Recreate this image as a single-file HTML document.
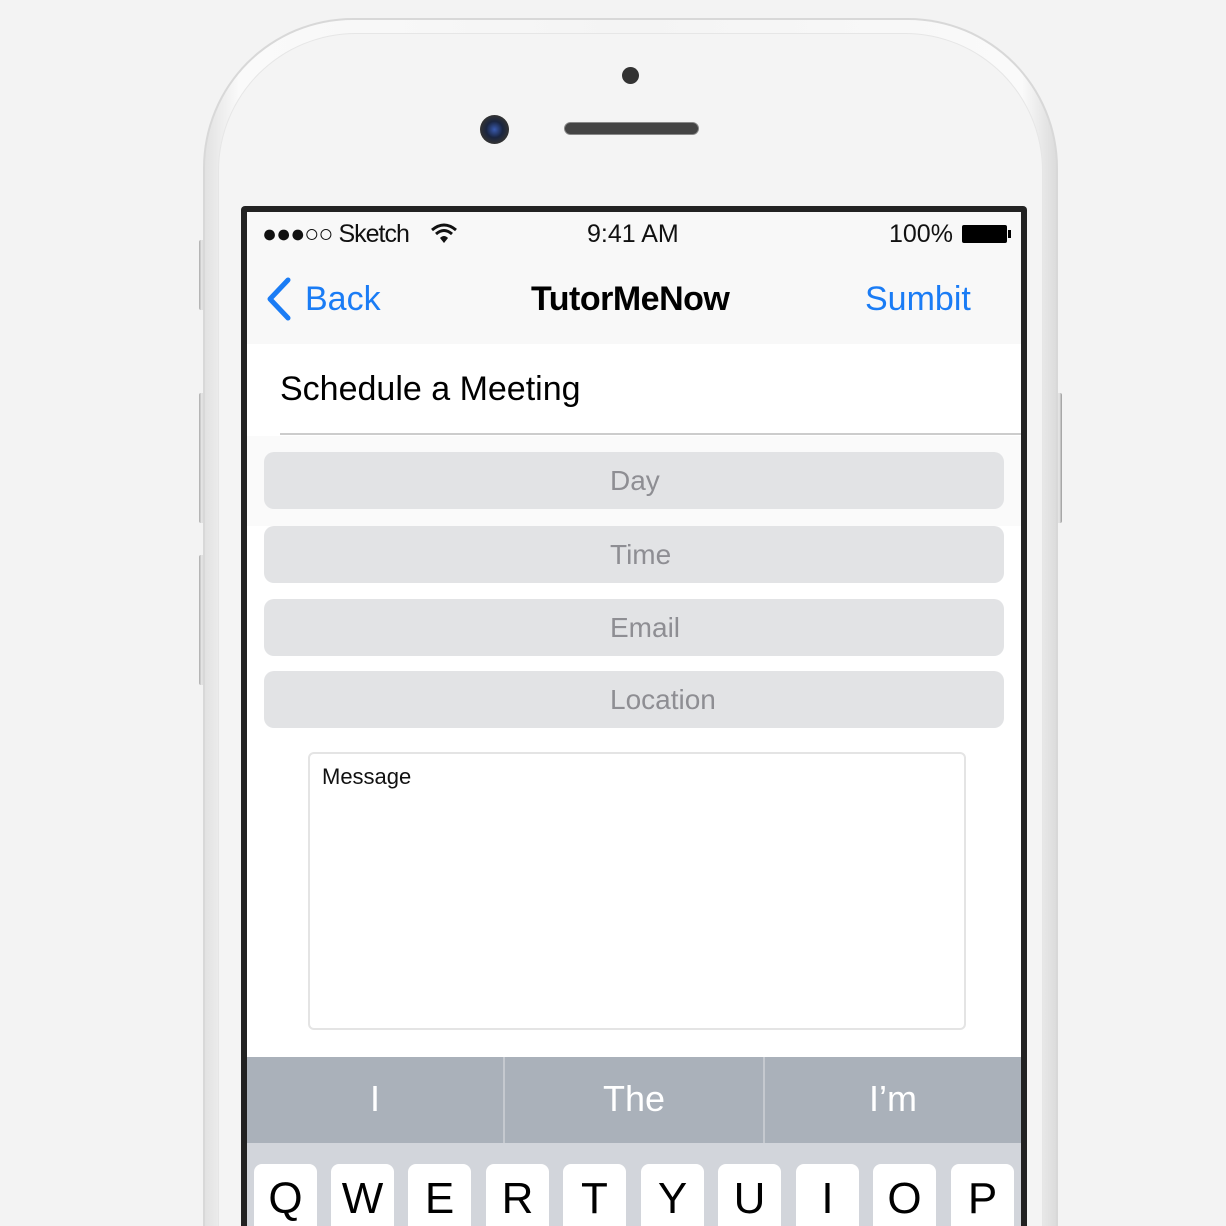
<!DOCTYPE html>
<html style="overflow:hidden;width:1226px;height:1226px"><head><meta charset="utf-8"><style>
*{margin:0;padding:0;box-sizing:border-box}
body{width:1226px;height:1226px;background:#f3f3f3;overflow:hidden;font-family:"Liberation Sans",sans-serif}
#w{position:relative;width:1226px;height:1226px;overflow:hidden}
.a{position:absolute}
.body{left:203px;top:18px;width:855px;height:1208px;border-radius:150px 150px 0 0;background:linear-gradient(90deg,#e2e2e2,#fafafa 4%,#f4f4f4 50%,#fafafa 96%,#dcdcdc);border:2px solid #d8d8d8;border-bottom:0}
.bez{left:218px;top:33px;width:825px;height:1193px;border-radius:138px 138px 0 0;background:#f4f4f4;border:1px solid #e6e6e6;border-bottom:0}
.btn{background:linear-gradient(90deg,#aaa,#eee,#999);border-radius:2px;width:6px}
.screen{left:241px;top:206px;width:786px;height:1020px;background:#222;border-radius:4px 4px 0 0}
.inner{left:247px;top:212px;width:774px;height:1014px;background:#fff;overflow:hidden}
.st{font-size:25px;color:#111;top:220px}
.field{left:264px;width:740px;height:57px;border-radius:10px;background:#e2e3e5;color:#8e8e93;font-size:28px;line-height:57px;padding-left:346px}
.key{top:1164px;width:63px;height:62px;background:#fff;border-radius:8px 8px 0 0;font-size:44px;text-align:center;line-height:70px;color:#000;padding-top:14px;overflow:hidden}
</style></head><body><div id="w">
<div class="a btn" style="left:199px;top:240px;height:70px"></div>
<div class="a btn" style="left:199px;top:393px;height:130px"></div>
<div class="a btn" style="left:199px;top:555px;height:130px"></div>
<div class="a btn" style="left:1056px;top:393px;height:130px"></div>
<div class="a body"></div>
<div class="a bez"></div>
<div class="a" style="left:622px;top:67px;width:17px;height:17px;border-radius:50%;background:#333"></div>
<div class="a" style="left:480px;top:115px;width:29px;height:29px;border-radius:50%;background:radial-gradient(circle,#3a5bb0 0,#1a2540 40%,#333 70%,#555)"></div>
<div class="a" style="left:564px;top:122px;width:135px;height:13px;border-radius:7px;background:#444;border:1px solid #888"></div>
<div class="a screen"></div>
<div class="a inner">
  <div class="a" style="left:0;top:0;width:774px;height:132px;background:#f8f8f8"></div>
  <div class="a" style="left:0;top:132px;width:774px;height:90px;background:#fff"></div>
</div>
<div class="a st" style="left:262px;letter-spacing:-1px">●●●○○ Sketch</div>
<svg class="a" style="left:430px;top:223px" width="28" height="22" viewBox="0 0 28 22"><path d="M2 7 Q14 -3 26 7" stroke="#111" stroke-width="3" fill="none"/><path d="M6 11 Q14 4 22 11" stroke="#111" stroke-width="3" fill="none"/><path d="M10 15 Q14 11 18 15 L14 20Z" fill="#111"/></svg>
<div class="a st" style="left:587px">9:41 AM</div>
<div class="a st" style="left:889px">100%</div>
<div class="a" style="left:962px;top:225px;width:45px;height:18px;background:#000;border-radius:2px"></div>
<div class="a" style="left:1008px;top:230px;width:3px;height:8px;background:#000"></div>
<svg class="a" style="left:264px;top:277px" width="30" height="44" viewBox="0 0 30 44"><path d="M24 3 L6 22 L24 41" stroke="#1a7cf5" stroke-width="5" fill="none" stroke-linecap="round" stroke-linejoin="round"/></svg>
<div class="a" style="left:305px;top:280px;font-size:34px;color:#1a7cf5">Back</div>
<div class="a" style="left:531px;top:280px;font-size:34px;color:#000;font-weight:bold;letter-spacing:-0.5px">TutorMeNow</div>
<div class="a" style="left:865px;top:280px;font-size:34px;color:#1a7cf5">Sumbit</div>
<div class="a" style="left:280px;top:370px;font-size:34px;color:#000">Schedule a Meeting</div>
<div class="a" style="left:280px;top:433px;width:741px;height:2px;background:#ccc"></div>
<div class="a" style="left:247px;top:436px;width:774px;height:90px;background:#fafafa"></div>
<div class="a field" style="top:452px">Day</div>
<div class="a field" style="top:526px">Time</div>
<div class="a field" style="top:599px">Email</div>
<div class="a field" style="top:671px">Location</div>
<div class="a" style="left:308px;top:752px;width:658px;height:278px;border:2px solid #e4e4e4;border-radius:6px;background:#fff;padding:10px 12px;font-size:22px;color:#111">Message</div>
<div class="a" style="left:247px;top:1057px;width:774px;height:86px;background:#aab1ba"></div>
<div class="a" style="left:503px;top:1057px;width:2px;height:86px;background:#c5c9cf"></div>
<div class="a" style="left:763px;top:1057px;width:2px;height:86px;background:#c5c9cf"></div>
<div class="a" style="left:247px;top:1078px;width:256px;text-align:center;font-size:36px;color:#fff">I</div>
<div class="a" style="left:505px;top:1078px;width:258px;text-align:center;font-size:36px;color:#fff">The</div>
<div class="a" style="left:765px;top:1078px;width:256px;text-align:center;font-size:36px;color:#fff">I’m</div>
<div class="a" style="left:247px;top:1143px;width:774px;height:83px;background:#d2d5db"></div>
<div class="a key" style="left:254px;padding-top:0">Q</div>
<div class="a key" style="left:331px;padding-top:0">W</div>
<div class="a key" style="left:408px;padding-top:0">E</div>
<div class="a key" style="left:486px;padding-top:0">R</div>
<div class="a key" style="left:563px;padding-top:0">T</div>
<div class="a key" style="left:641px;padding-top:0">Y</div>
<div class="a key" style="left:718px;padding-top:0">U</div>
<div class="a key" style="left:796px;padding-top:0">I</div>
<div class="a key" style="left:873px;padding-top:0">O</div>
<div class="a key" style="left:951px;padding-top:0">P</div>
</div></body></html>
